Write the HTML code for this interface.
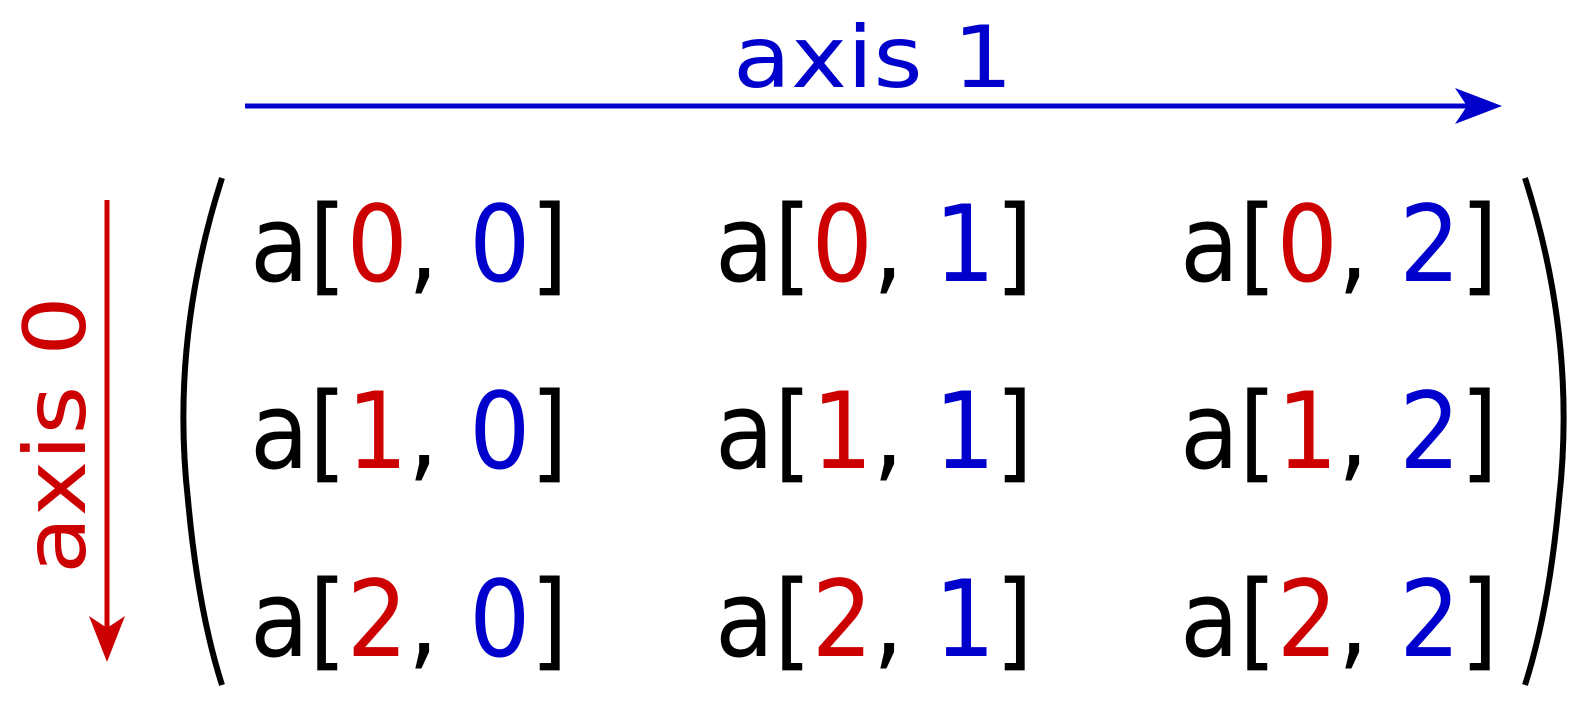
<!DOCTYPE html>
<html><head><meta charset="utf-8"><style>html,body{margin:0;padding:0;background:#fff}svg{display:block}</style></head>
<body>
<svg width="1591" height="703" viewBox="0 0 1591 703" xmlns="http://www.w3.org/2000/svg" font-family="DejaVu Sans, Liberation Sans, sans-serif">
<rect width="1591" height="703" fill="#fff"/>
<text x="733" y="87" font-size="86" fill="#0000cc" textLength="280" lengthAdjust="spacingAndGlyphs">axis 1</text>
<line x1="245" y1="106" x2="1470" y2="106" stroke="#0000cc" stroke-width="5"/>
<path d="M1502,106 L1455,88 L1467,106 L1455,124 Z" fill="#0000cc"/>
<text transform="translate(85,574) rotate(-90)" font-size="86" fill="#cc0000" textLength="278" lengthAdjust="spacingAndGlyphs">axis 0</text>
<line x1="107" y1="200" x2="107" y2="635" stroke="#cc0000" stroke-width="5"/>
<path d="M107,662 L89,616 L107,628 L125,616 Z" fill="#cc0000"/>
<path d="M222,178 Q170,340 188,500 Q198,610 222,685" fill="none" stroke="#000" stroke-width="6"/>
<path d="M1525,178 Q1577,340 1559,500 Q1549,610 1525,685" fill="none" stroke="#000" stroke-width="6"/>
<g font-size="106">
<text x="250" y="281" textLength="318" lengthAdjust="spacingAndGlyphs">a[<tspan fill="#cc0000">0</tspan>, <tspan fill="#0000cc">0</tspan>]</text>
<text x="715" y="281" textLength="318" lengthAdjust="spacingAndGlyphs">a[<tspan fill="#cc0000">0</tspan>, <tspan fill="#0000cc">1</tspan>]</text>
<text x="1180" y="281" textLength="318" lengthAdjust="spacingAndGlyphs">a[<tspan fill="#cc0000">0</tspan>, <tspan fill="#0000cc">2</tspan>]</text>
<text x="250" y="468" textLength="318" lengthAdjust="spacingAndGlyphs">a[<tspan fill="#cc0000">1</tspan>, <tspan fill="#0000cc">0</tspan>]</text>
<text x="715" y="468" textLength="318" lengthAdjust="spacingAndGlyphs">a[<tspan fill="#cc0000">1</tspan>, <tspan fill="#0000cc">1</tspan>]</text>
<text x="1180" y="468" textLength="318" lengthAdjust="spacingAndGlyphs">a[<tspan fill="#cc0000">1</tspan>, <tspan fill="#0000cc">2</tspan>]</text>
<text x="250" y="656" textLength="318" lengthAdjust="spacingAndGlyphs">a[<tspan fill="#cc0000">2</tspan>, <tspan fill="#0000cc">0</tspan>]</text>
<text x="715" y="656" textLength="318" lengthAdjust="spacingAndGlyphs">a[<tspan fill="#cc0000">2</tspan>, <tspan fill="#0000cc">1</tspan>]</text>
<text x="1180" y="656" textLength="318" lengthAdjust="spacingAndGlyphs">a[<tspan fill="#cc0000">2</tspan>, <tspan fill="#0000cc">2</tspan>]</text>
</g>
</svg>
</body></html>
